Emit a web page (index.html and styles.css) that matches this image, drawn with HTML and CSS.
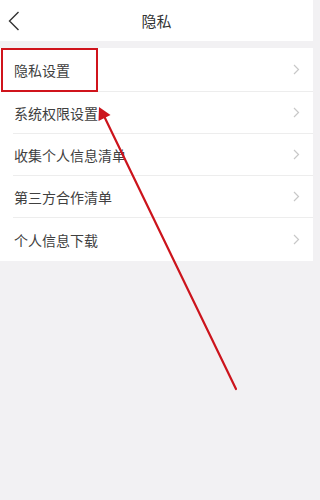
FILE: index.html
```html
<!DOCTYPE html>
<html lang="zh">
<head>
<meta charset="utf-8">
<link rel="stylesheet" href="styles.css">
</head>
<body>
<div class="page">
  <header class="topbar">
    <svg class="back" width="12" height="20" viewBox="0 0 12 20"><path d="M10.5 1 L1.5 10 L10.5 19" fill="none" stroke="#333" stroke-width="1.4"/></svg>
    <div class="title">隐私</div>
  </header>
  <div class="gap"></div>
  <ul class="list">
    <li class="row first"><span>隐私设置</span><svg class="chev" width="7" height="11" viewBox="0 0 7 11"><path d="M1 1 L5.5 5.5 L1 10" fill="none" stroke="#c8c8c8" stroke-width="1.2"/></svg></li>
    <li class="row"><span>系统权限设置</span><svg class="chev" width="7" height="11" viewBox="0 0 7 11"><path d="M1 1 L5.5 5.5 L1 10" fill="none" stroke="#c8c8c8" stroke-width="1.2"/></svg></li>
    <li class="row"><span>收集个人信息清单</span><svg class="chev" width="7" height="11" viewBox="0 0 7 11"><path d="M1 1 L5.5 5.5 L1 10" fill="none" stroke="#c8c8c8" stroke-width="1.2"/></svg></li>
    <li class="row"><span>第三方合作清单</span><svg class="chev" width="7" height="11" viewBox="0 0 7 11"><path d="M1 1 L5.5 5.5 L1 10" fill="none" stroke="#c8c8c8" stroke-width="1.2"/></svg></li>
    <li class="row last"><span>个人信息下载</span><svg class="chev" width="7" height="11" viewBox="0 0 7 11"><path d="M1 1 L5.5 5.5 L1 10" fill="none" stroke="#c8c8c8" stroke-width="1.2"/></svg></li>
  </ul>
  <div class="highlight"></div>
  <svg class="arrow" width="313" height="500" viewBox="0 0 313 500">
    <line x1="236" y1="389" x2="104" y2="116" stroke="#cc141c" stroke-width="2.2" stroke-linecap="round"/>
    <polygon points="99,107 98.5,121 110.5,115" fill="#cc141c"/>
  </svg>
</div>
</body>
</html>
```
FILE: styles.css
```css
* { box-sizing: border-box; }
html, body {
  margin: 0;
  padding: 0;
  background: #f2f1f3;
}
.page {
  position: relative;
  width: 313px;
  height: 500px;
  overflow: hidden;
  background: #f2f1f3;
  font-family: "Noto Sans CJK SC", "Noto Sans", sans-serif;
}
.topbar {
  position: relative;
  height: 41px;
  background: #fff;
  display: flex;
  align-items: center;
  justify-content: center;
}
.back {
  position: absolute;
  left: 8px;
  top: 11px;
}
.title {
  font-size: 15px;
  color: #333;
  line-height: 1;
}
.gap {
  height: 7px;
}
.list {
  list-style: none;
  margin: 0;
  padding: 0 0 0 13px;
  background: #fff;
}
.row {
  height: 42px;
  display: flex;
  align-items: center;
  justify-content: space-between;
  padding: 0 13px 0 1px;
  border-bottom: 1px solid #ededed;
  font-size: 14px;
  color: #404040;
}
.row.first { height: 44px; }
.row.last { height: 43px; border-bottom: none; }
.row span { line-height: 1; }
.highlight {
  position: absolute;
  left: 1px;
  top: 48px;
  width: 97px;
  height: 44px;
  border: 2.5px solid #d0141c;
}
.arrow {
  position: absolute;
  left: 0;
  top: 0;
}
```
